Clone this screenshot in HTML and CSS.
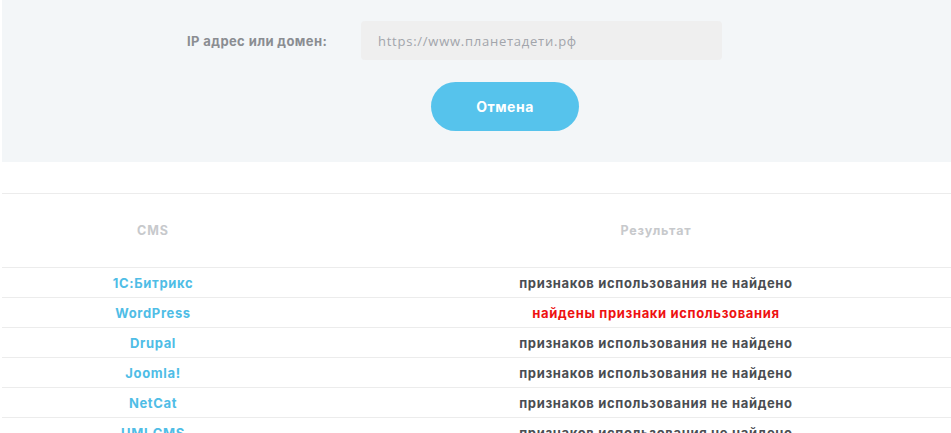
FILE: index.html
```html
<!DOCTYPE html>
<html lang="ru">

<head>
    <meta charset="UTF-8">
    <meta name="viewport" content="width=device-width, initial-scale=1.0">
    <title>Определение CMS сайта</title>
    <link rel="stylesheet" href="styles.css">
</head>

<body>

    <div class="page">
        <!-- форма проверки -->
        <section class="check-panel">
            <div class="form-row">
                <label class="form-label" for="domain">IP адрес или домен:</label>
                <input class="form-input" id="domain" type="text" placeholder="https://www.планетадети.рф">
            </div>
            <div class="form-actions">
                <button class="btn-cancel">Отмена</button>
            </div>
        </section>

        <!-- результаты -->
        <table class="cms-table">
            <thead>
                <tr>
                    <th class="col-cms">CMS</th>
                    <th class="col-result">Результат</th>
                </tr>
            </thead>
            <tbody>
                <tr>
                    <td class="cms-name">1С:Битрикс</td>
                    <td class="result">признаков использования не найдено</td>
                </tr>
                <tr>
                    <td class="cms-name">WordPress</td>
                    <td class="result found">найдены признаки использования</td>
                </tr>
                <tr>
                    <td class="cms-name">Drupal</td>
                    <td class="result">признаков использования не найдено</td>
                </tr>
                <tr>
                    <td class="cms-name">Joomla!</td>
                    <td class="result">признаков использования не найдено</td>
                </tr>
                <tr>
                    <td class="cms-name">NetCat</td>
                    <td class="result">признаков использования не найдено</td>
                </tr>
                <tr>
                    <td class="cms-name">UMI.CMS</td>
                    <td class="result">признаков использования не найдено</td>
                </tr>
            </tbody>
        </table>
    </div>

</body>

</html>
```

FILE: styles.css
```css
body {
    margin: 0;
    padding: 0;
    font-family: Inter, "Open Sans", sans-serif;
    background-color: #fff;
    overflow: hidden;
}

.page {
    width: 1006px;
    margin-left: 2px;
}

.check-panel {
    background-color: #f3f6f8;
    padding: 21px 0 31px;
}

.form-row {
    display: flex;
    align-items: center;
    padding-left: 185px;
}

.form-label {
    font-size: 13px;
    font-weight: 700;
    letter-spacing: 0.4px;
    color: #8a8d92;
    width: 140px;
    margin-right: 34px;
    white-space: nowrap;
}

.form-input {
    width: 361px;
    height: 39px;
    box-sizing: border-box;
    border: none;
    border-radius: 4px;
    background-color: #efefef;
    padding: 0 17px;
    font-family: "Open Sans", sans-serif;
    font-size: 13px;
    letter-spacing: 0.75px;
    color: #555;
    outline: none;
}

.form-input::placeholder {
    color: #a2a5ab;
}

.form-actions {
    display: flex;
    justify-content: center;
    margin-top: 22px;
}

.btn-cancel {
    width: 148px;
    height: 49px;
    border: none;
    border-radius: 25px;
    background-color: #56c3ec;
    color: #fff;
    font-family: Inter, sans-serif;
    font-size: 14px;
    font-weight: 700;
    letter-spacing: 0.5px;
}

.cms-table {
    width: 100%;
    margin-top: 31px;
    border-collapse: collapse;
    border-top: 1px solid #ececec;
}

.cms-table th {
    height: 71px;
    font-size: 12.5px;
    font-weight: 700;
    letter-spacing: 0.9px;
    color: #c7c9cc;
    text-align: center;
    border-bottom: 1px solid #ececec;
}

.col-cms {
    width: 300px;
}

.cms-table td {
    height: 29px;
    padding: 0;
    text-align: center;
    font-size: 13px;
    font-weight: 700;
    letter-spacing: 0.65px;
    border-bottom: 1px solid #ececec;
}

.cms-name {
    color: #4fbde6;
}

.result {
    color: #4a4d52;
}

.result.found {
    color: #ee1111;
}
```
